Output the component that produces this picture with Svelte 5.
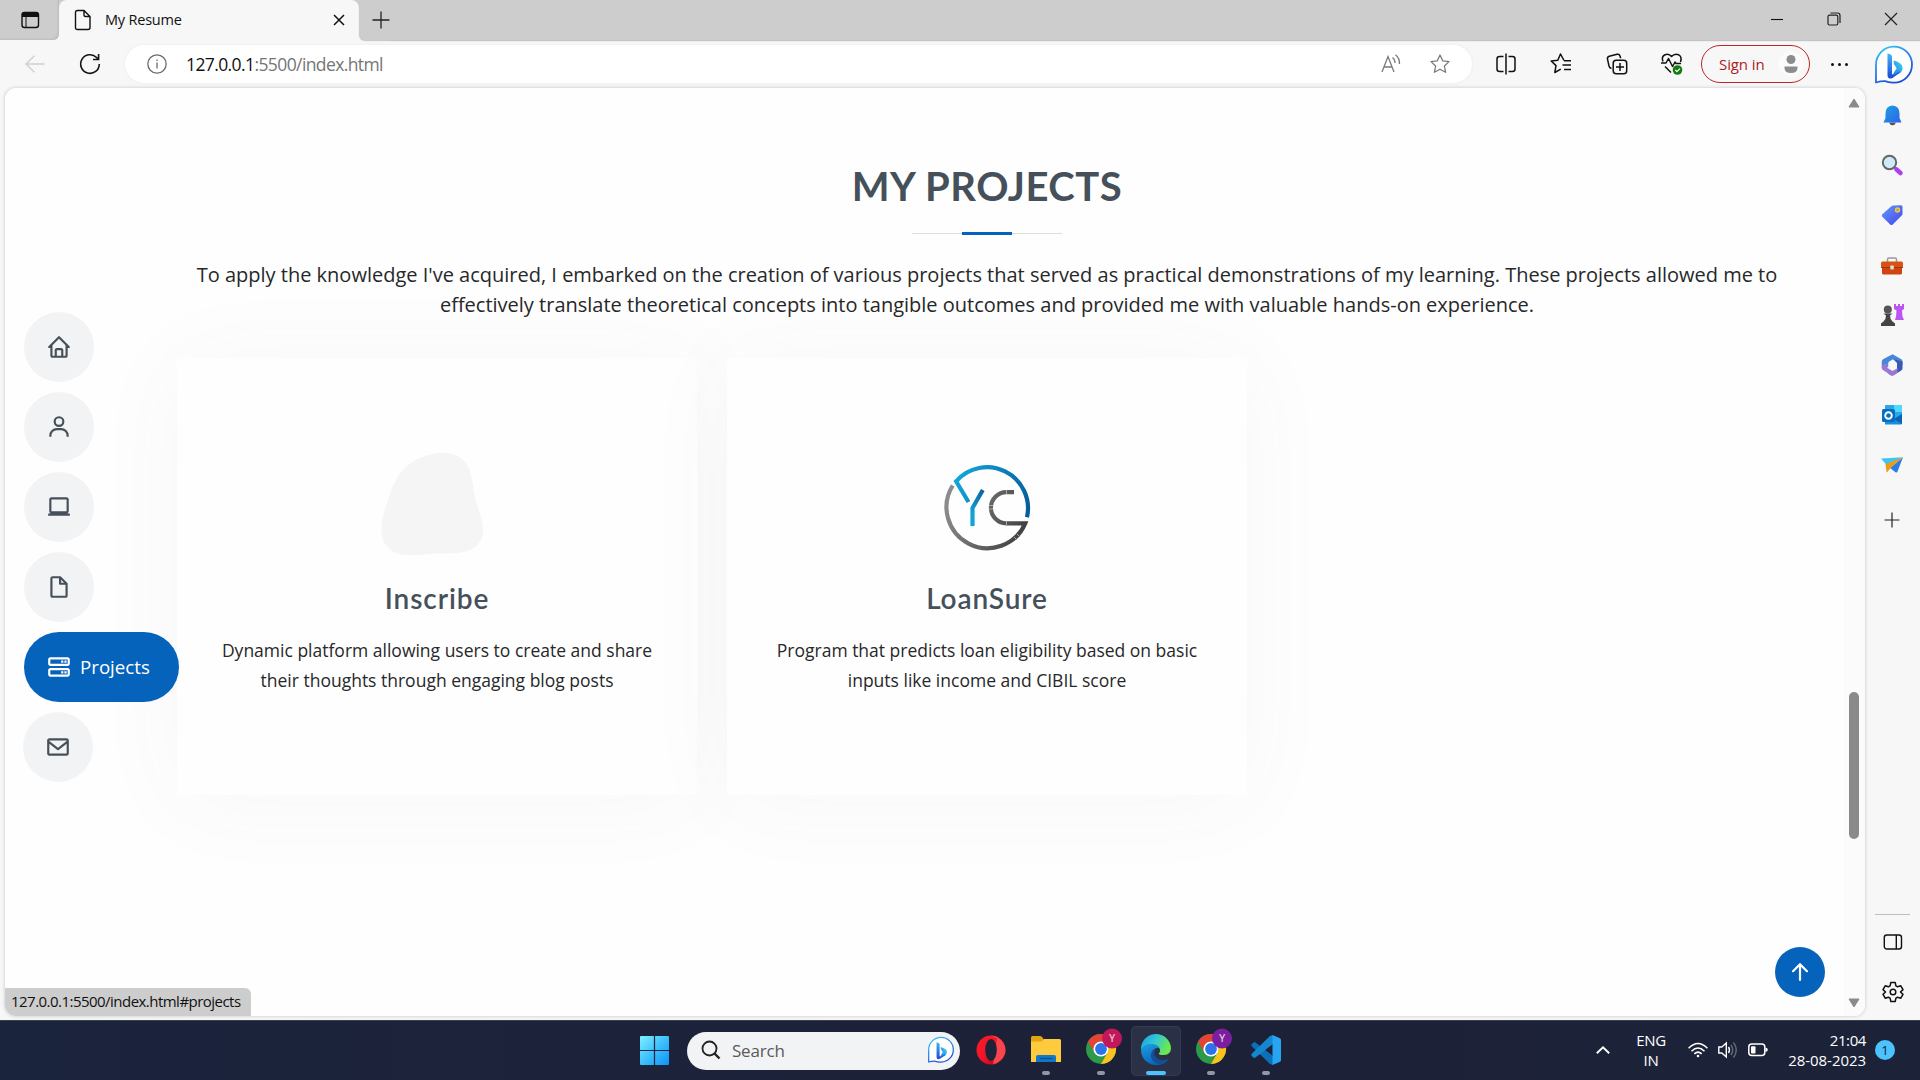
<script>
  const nav = [
    { d: 'M3 13h1v7c0 1.103.897 2 2 2h12c1.103 0 2-.897 2-2v-7h1a1 1 0 0 0 .707-1.707l-9-9a.999.999 0 0 0-1.414 0l-9 9A1 1 0 0 0 3 13zm7 7v-5h4v5h-4zm2-15.586 6 6V15l.001 5H16v-5c0-1.103-.897-2-2-2h-4c-1.103 0-2 .897-2 2v5H6v-9.586l6-6z' },
    { d: 'M12 2a5 5 0 1 0 5 5 5 5 0 0 0-5-5zm0 8a3 3 0 1 1 3-3 3 3 0 0 1-3 3zm9 11v-1a7 7 0 0 0-7-7h-4a7 7 0 0 0-7 7v1h2v-1a5 5 0 0 1 5-5h4a5 5 0 0 1 5 5v1z' },
    { d: 'M20 17.722c.595-.347 1-.985 1-1.722V5c0-1.103-.897-2-2-2H5c-1.103 0-2 .897-2 2v11c0 .736.405 1.375 1 1.722V18H2v2h20v-2h-2v-.278zM5 16V5h14l.002 11H5z' },
    { d: 'M19.937 8.68c-.011-.032-.02-.063-.033-.094a.997.997 0 0 0-.196-.293l-6-6a.997.997 0 0 0-.293-.196c-.03-.014-.062-.022-.094-.033a.991.991 0 0 0-.259-.051C13.04 2.011 13.021 2 13 2H6c-1.103 0-2 .897-2 2v16c0 1.103.897 2 2 2h12c1.103 0 2-.897 2-2V9c0-.021-.011-.04-.013-.062a.99.99 0 0 0-.05-.258zM16.586 8H14V5.414L16.586 8zM6 20V4h6v5a1 1 0 0 0 1 1h5l.002 10H6z' },
    { d: 'M20 3H4c-1.103 0-2 .897-2 2v4c0 1.103.897 2 2 2h16c1.103 0 2-.897 2-2V5c0-1.103-.897-2-2-2zM4 9V5h16v4zm16 4H4c-1.103 0-2 .897-2 2v4c0 1.103.897 2 2 2h16c1.103 0 2-.897 2-2v-4c0-1.103-.897-2-2-2zM4 19v-4h16v4z', extra: 'M17 6h2v2h-2zm-3 0h2v2h-2zm3 10h2v2h-2zm-3 0h2v2h-2z', label: 'Projects' },
    { d: 'M20 4H4c-1.103 0-2 .897-2 2v12c0 1.103.897 2 2 2h16c1.103 0 2-.897 2-2V6c0-1.103-.897-2-2-2zm0 2v.511l-8 6.223-8-6.222V6h16zM4 18V9.044l7.386 5.745a.994.994 0 0 0 1.228 0L20 9.044 20.002 18H4z' }
  ];
</script>

{#snippet bing(size)}
  <svg width={size} height={size} viewBox="0 0 38 38">
    <defs>
      <linearGradient id="bRing" x1="0" y1="0" x2="0.5" y2="1"><stop offset="0" stop-color="#2fd0ee" /><stop offset=".5" stop-color="#2f86ee" /><stop offset="1" stop-color="#1d50d8" /></linearGradient>
      <linearGradient id="bStem" x1="0" y1="0" x2="0" y2="1"><stop offset="0" stop-color="#45b4f5" /><stop offset="1" stop-color="#1b48d6" /></linearGradient>
      <linearGradient id="bBowl" x1="1" y1="0" x2="0" y2="1"><stop offset="0" stop-color="#3ae0f0" /><stop offset="1" stop-color="#2a62e4" /></linearGradient>
    </defs>
    <path d="M1 36.5V19A18 18 0 1 1 19 36.6q-5 .2-9-1.4-4-.2-9 1.300z" fill="#fff" stroke="url(#bRing)" stroke-width="1.800" stroke-linejoin="round" />
    <path d="M18.600 14.500q5.500 1.300 8 4.300 2.400 4-.8 7.800l-9.400 4.400 3.800-6.600 1.500-2-1-1.600q-2.700-3-2.100-6.300z" fill="url(#bBowl)" />
    <path d="M12.500 7.600q4.300.6 4.500 3v17.600l2 .5 6-3.800-.5 2-7 5q-5 1.900-5-2.800z" fill="url(#bStem)" />
  </svg>
{/snippet}

{#snippet chrome(fill)}
  <svg width="36" height="36" viewBox="0 0 36 36">
    <circle cx="15" cy="20" r="15" fill="#2c9a48" />
    <path d="M2 12.500A15 15 0 0 1 28 12.500H15A7.500 7.500 0 0 0 8.500 23.700z" fill="#e64334" />
    <path d="M28 12.500A15 15 0 0 1 15 35L21.500 23.700A7.500 7.500 0 0 0 15 12.500z" fill="#fcc31c" />
    <circle cx="15" cy="20" r="7.600" fill="#fff" />
    <circle cx="15" cy="20" r="5.900" fill="#2b74ea" />
    <circle cx="26" cy="9.500" r="10" {fill} />
    <text x="26" y="13.300" text-anchor="middle" font-size="10.500" font-weight="600" fill="#e6bccb">Y</text>
  </svg>
{/snippet}

<div class="screen">
  <header class="tabs">
    <div class="tab-menu">
      <svg width="20" height="20" viewBox="0 0 20 20"><rect x="2" y="2.500" width="16.500" height="15" rx="2.500" fill="none" stroke="#111" stroke-width="1.400" /><path d="M2 7V4.500Q2 2 4.500 2H16q2.500 0 2.500 2.500V7z" fill="#111" /><path d="M6 7v10" stroke="#111" stroke-width="1" /></svg>
    </div>
    <div class="tab">
      <svg width="18" height="22" viewBox="0 0 18 22" fill="none" stroke="#111" stroke-width="1.400"><path d="M3.500 1.500H10L16 7.500V18.500q0 2-2 2H3.500q-2 0-2-2V3.500q0-2 2-2zM10 1.500V6q0 1.500 1.500 1.500H16" /></svg>
      <span>My Resume</span>
      <svg class="x" width="12" height="12" viewBox="0 0 12 12" stroke="#111" stroke-width="1.500"><path d="M1 1l10 10M11 1L1 11" /></svg>
    </div>
    <svg class="plus" width="18" height="18" viewBox="0 0 18 18" stroke="#222" stroke-width="1.300"><path d="M9 .5v17M.5 9h17" /></svg>
    <div class="controls">
      <svg width="14" height="14" viewBox="0 0 14 14" stroke="#111" stroke-width="1.100"><path d="M1 7.500h12" /></svg>
      <svg width="14" height="14" viewBox="0 0 14 14" fill="none" stroke="#222" stroke-width="1.200"><rect x="1" y="3.200" width="9.800" height="9.800" rx="1.500" /><path d="M3.500 1H10.500q2.500 0 2.500 2.500V11" /></svg>
      <svg width="14" height="14" viewBox="0 0 14 14" stroke="#222" stroke-width="1.200"><path d="M1 1l12 12M13 1L1 13" /></svg>
    </div>
  </header>

  <div class="toolbar">
    <svg class="back" width="20" height="18" viewBox="0 0 20 18" fill="none" stroke="#cfcfcf" stroke-width="1.400"><path d="M19.500 9H1M9.500 .8L1 9l8.500 8.200" /></svg>
    <svg class="reload" width="22" height="22" viewBox="0 0 22 22" fill="none" stroke="#151515" stroke-width="1.600"><path d="M20.300 11A9.300 9.300 0 1 1 17.600 4.500L19.500 6.300M19.600 1v5.500H14" /></svg>
    <div class="address">
      <svg width="20" height="20" viewBox="0 0 20 20" fill="none" stroke="#6b6b6b" stroke-width="1.300"><circle cx="10" cy="10" r="9.200" /><path d="M10 8.500v6M10 5.500v1.500" /></svg>
      <span class="url"><b>127.0.0.1</b>:5500/index.html</span>
      <svg class="aloud" width="20" height="20" viewBox="0 0 20 20" fill="none" stroke="#7a7a7a" stroke-width="1.300"><path d="M1 18L7 2.500 13 18M3 13h8M11.500 3.500q2.500 1.800 2.500 5.500M14.500 .8q4.300 3.500 4 9.200" /></svg>
      <svg width="20" height="20" viewBox="0 0 20 20" fill="none" stroke="#7a7a7a" stroke-width="1.300" stroke-linejoin="round"><path d="M10 1l2.700 5.800 6.300.8-4.600 4.400 1.200 6.300L10 15.200l-5.600 3.100L5.600 12 1 7.600l6.300-.8z" /></svg>
    </div>
    <div class="tools">
      <i><svg width="22" height="22" viewBox="0 0 22 22" fill="none" stroke="#111" stroke-width="1.500"><path d="M8.500 3.500h-4Q2 3.500 2 6v10q0 2.500 2.500 2.500h4M13.500 3.500h4Q20 3.500 20 6v10q0 2.500-2.500 2.500h-4M11 .5v21" /></svg></i>
      <i><svg width="22" height="22" viewBox="0 0 22 22" fill="none" stroke="#111" stroke-width="1.500" stroke-linejoin="round"><path d="M14 7.500L10.500 1 7.800 7.200 1.200 8l4.800 4.600L4.800 19.500l6-3.400M14 7.700h7M12.500 12h8.500M14 16.500h7" /></svg></i>
      <i><svg width="22" height="22" viewBox="0 0 22 22" fill="none" stroke="#111" stroke-width="1.500"><rect x="7.200" y="7.200" width="13.500" height="13.500" rx="3" /><path d="M14 10v8M10 14h8M5.500 15.500q-2-.5-2.500-2.500L1.500 6.200Q1 4 3.300 3.300L11 1.300q2.300-.5 3 1.700l.7 2.200" /></svg></i>
      <i><svg width="24" height="24" viewBox="0 0 24 24" fill="none" stroke="#111" stroke-width="1.500" stroke-linejoin="round"><path d="M3 9.500Q1 4.500 5 2.700 9 1.200 11.500 4.500 14.500 1.200 18.500 2.700 22.300 4.800 20.500 10M1 11h5l2.500-4.500 4 8L15 10l1 1.500h5M5 14.500l6 6" /><circle cx="17.500" cy="18" r="4.800" fill="#127c10" stroke="none" /><path d="M15.300 18l1.600 1.600 3-3" stroke="#fff" stroke-width="1.200" /></svg></i>
    </div>
    <div class="signin"><span>Sign in</span>
      <svg width="26" height="26" viewBox="0 0 26 26"><circle cx="13" cy="13" r="12.500" fill="#fbfbfb" /><circle cx="13" cy="8.500" r="4.500" fill="#8c8c8c" /><path d="M6.500 15.500h13v1.500q0 5-6.500 5t-6.500-5z" fill="#8c8c8c" /></svg>
    </div>
    <div class="dots"><u></u><u></u><u></u></div>
    <div class="bing">{@render bing(38)}</div>
  </div>

  <div class="middle">
    <main>
      <section>
        <h2>MY PROJECTS</h2>
        <div class="rule"><hr /></div>
        <p class="intro">To apply the knowledge I've acquired, I embarked on the creation of various projects that served as practical demonstrations of my learning. These projects allowed me to<br />effectively translate theoretical concepts into tangible outcomes and provided me with valuable hands-on experience.</p>
        <div class="cards">
          <article>
            <div class="art blob"><svg width="125" height="125" viewBox="0 0 600 600"><path fill="#f5f5f5" d="M300,521.0016835830174C376.1290562159157,517.8887921683347,466.0731472004068,529.7835943286574,510.70327084640275,468.03025145048787C554.3714126377745,407.6079735673963,508.03601936045806,328.9844924480964,491.2728898941984,256.3432110539036C474.5976632858925,184.082847569629,479.9380746630129,96.60480741107993,416.23090153303,58.64404602377083C348.86323505073057,18.502131276798302,261.93793281208167,40.57373210992963,193.5410806939664,78.93577620505333C130.42746243093433,114.334589627462,98.30271207620316,179.96522072025542,76.75703585869454,249.04625023123273C51.97151888228291,328.5150500222984,13.704378332031375,421.85034740162234,66.52175969318436,486.19268352777647C119.04800174914682,550.1803526380478,217.28368757567262,524.383925680826,300,521.0016835830174" /></svg></div>
            <h4>Inscribe</h4>
            <p>Dynamic platform allowing users to create and share<br />their thoughts through engaging blog posts</p>
          </article>
          <article>
            <div class="art">
              <svg width="90" height="90" viewBox="0 0 90 90" fill="none" stroke-width="4.200">
                <defs>
                  <linearGradient id="yc1" x1="14" y1="20" x2="88" y2="50" gradientUnits="userSpaceOnUse"><stop offset="0" stop-color="#12a4d8" /><stop offset="1" stop-color="#075a99" /></linearGradient>
                  <linearGradient id="yc2" x1="4" y1="40" x2="80" y2="70" gradientUnits="userSpaceOnUse"><stop offset="0" stop-color="#8c8c8e" /><stop offset="1" stop-color="#424244" /></linearGradient>
                  <linearGradient id="yc3" x1="28" y1="50" x2="42" y2="27" gradientUnits="userSpaceOnUse"><stop offset="0" stop-color="#12a4d8" /><stop offset="1" stop-color="#0a62a4" /></linearGradient>
                </defs>
                <path d="M26.500 39L14.100 18.300A41 41 0 0 1 85 54.200" stroke="url(#yc1)" />
                <path d="M40.800 27L30.500 45V63" stroke="url(#yc3)" />
                <path d="M10.700 22.500A41 41 0 1 0 83.200 60.300H64.500A15.600 15.600 0 0 1 64.500 29.100H72" stroke="url(#yc2)" />
                <path d="M47 42.500h4M47 46h4M64.500 27v4M64.500 58v4M75 71l3 3M72 74l3 3" stroke="#aaa" stroke-width="1" />
              </svg>
            </div>
            <h4>LoanSure</h4>
            <p>Program that predicts loan eligibility based on basic<br />inputs like income and CIBIL score</p>
          </article>
        </div>
      </section>
      <div class="scroll">
        <svg width="12" height="10" viewBox="0 0 12 10"><path d="M6 1l5 8H1z" fill="#8b8b8b" stroke="#8b8b8b" stroke-linejoin="round" /></svg>
        <div class="thumb"></div>
        <svg width="12" height="10" viewBox="0 0 12 10"><path d="M6 9l5-8H1z" fill="#8b8b8b" stroke="#8b8b8b" stroke-linejoin="round" /></svg>
      </div>
      <nav>
        {#each nav as item, i}
          <a class:active={item.label} class:last={i === 5} href="#projects">
            <svg width="26" height="26" viewBox="0 0 24 24" fill="currentColor"><path d={item.d} />{#if item.extra}<path d={item.extra} />{/if}</svg>
            {#if item.label}<span>{item.label}</span>{/if}
          </a>
        {/each}
      </nav>
      <div class="top">
        <svg width="20" height="20" viewBox="0 0 20 20" fill="none" stroke="#fff" stroke-width="2.200" stroke-linecap="round" stroke-linejoin="round"><path d="M10 18V2.500M3 9.200l7-7 7 7" /></svg>
      </div>
      <div class="status">127.0.0.1:5500/index.html#projects</div>
    </main>

    <aside>
      <i><svg width="22" height="22" viewBox="0 0 22 22"><defs><linearGradient id="bell" x1="0" y1="0" x2="1" y2="1"><stop offset="0" stop-color="#1ea1dc" /><stop offset="1" stop-color="#2c62f0" /></linearGradient></defs><path d="M8 18.500h7q-1 2.700-3.500 2.700T8 18.500z" fill="#555" /><path d="M11.500 1.500q7 .5 7 8v4.500l2 4.500H2.500l2-4.500V9.500q0-7.500 7-8z" fill="url(#bell)" /></svg></i>
      <i><svg width="22" height="22" viewBox="0 0 22 22"><path d="M13 13l3 3" stroke="#666" stroke-width="2" /><path d="M15.500 15.500l4 3.500" stroke="#b23df0" stroke-width="4.500" stroke-linecap="round" /><circle cx="8.500" cy="8.500" r="6.700" fill="#cfeafa" stroke="#666" stroke-width="2" /></svg></i>
      <i><svg width="22" height="22" viewBox="0 0 22 22"><defs><linearGradient id="tag" x1="0" y1="0" x2="1" y2="1"><stop offset="0" stop-color="#669cf8" /><stop offset="1" stop-color="#4242ee" /></linearGradient></defs><path d="M12.500 1.500l7.500-.3q1.500 0 1.500 1.500v7q0 1-.8 1.800l-9 9q-1.200 1.200-2.500 0L1.300 12.700q-1-1.200 0-2.400l9-8q1-.8 2.200-.8z" fill="url(#tag)" /><circle cx="16.500" cy="6" r="2" fill="#99c" stroke="#f5cb27" stroke-width="1.400" /></svg></i>
      <i class="low"><svg width="24" height="20" viewBox="0 0 24 20"><path d="M7.500 7V3.500Q7.500 2 9 2h6q1.500 0 1.500 1.500V7" fill="none" stroke="#999" stroke-width="1.500" /><rect x="2" y="10" width="20" height="8.500" rx="1.500" fill="#cf4410" /><rect x="1" y="5.500" width="22" height="6" rx="1.500" fill="#d85414" /><path d="M1 11.500h22" stroke="#a8340c" /><rect x="10.300" y="9.500" width="3.500" height="4" rx=".8" fill="#ddd" /></svg></i>
      <i><svg width="24" height="24" viewBox="0 0 24 24"><path d="M14 1h2v2h2V1h2v2h2V1h2v5l-2 1.500.5 6 1.500 3.500h-9l1-3.500.5-6L14 6z" fill="#bd55f5" /><circle cx="7.800" cy="6.500" r="4" fill="#555" /><path d="M3.500 10.500h9l-2.500 2q0 4 2.500 6l2.500 2v2.500H1v-2.500l2.500-2q2.500-2 2.500-6z" fill="#444" /></svg></i>
      <i><svg width="22" height="22" viewBox="0 0 22 22"><path d="M11.500.3L20 5q1.500.9 1.500 2.500v4l-5-4-4.500-2.300-4.500 2.800v4.500L1.500 15Q.8 14.300.8 13V7.500Q.8 6 2 5.200z" fill="#4488da" /><path d="M21.500 7.500v6.700q0 1.500-1.200 2.200l-7.800 4.800q-1.300.8-2.700 0l-2.800-1.700 9-4.500V9l-4-4z" fill="#3b59b4" /><path d="M.8 11.500v2.500q0 1.300 1.200 2.100l7.500 4.900q1.700 1 3.200 0l3.800-2.400V14.300l-5 2.700-5-3V9z" fill="#9c78d2" /><circle cx="11.200" cy="11" r="3.900" fill="#f7f7f7" /></svg></i>
      <i><svg width="22" height="22" viewBox="0 0 22 22"><rect x="4" y="1" width="17" height="13" rx="1" fill="#28a8ea" /><path d="M13 1h8v7h-8z" fill="#50d9ff" /><path d="M4 20.500h16q1 0 1-1V10l-8 5-9 2z" fill="#1490df" /><path d="M21 10v10l-8-5z" fill="#0a62b5" /><rect x="1" y="5" width="13" height="13" rx="1.500" fill="#0a6cbe" /><circle cx="7.500" cy="11.500" r="3.300" fill="none" stroke="#fff" stroke-width="1.900" /></svg></i>
      <i><svg width="24" height="18" viewBox="0 0 24 18"><path d="M1 2.500L23 1.300 7 9.500z" fill="#3fc4f4" /><path d="M23 1.300L17.500 15.500q-.5 1.500-2 .8L10 12z" fill="#2a7cec" /><path d="M5.500 8.200L23 1.300 11 11.500l-4 5q-.8-1-.8-3z" fill="#ee9c16" /></svg></i>
      <i class="add"><svg width="16" height="16" viewBox="0 0 16 16" stroke="#222" stroke-width="1.200"><path d="M8 .5v15M.5 8h15" /></svg></i>
      <div class="bottom">
        <i><svg width="20" height="18" viewBox="0 0 20 18" fill="none" stroke="#111" stroke-width="1.400"><rect x="1.300" y="2" width="17.200" height="14" rx="2.500" /><path d="M13.300 2v14" /></svg></i>
        <i><svg width="22" height="22" viewBox="0 0 22 22" fill="none" stroke="#111" stroke-width="1.500" stroke-linejoin="round"><path d="M8.800 1.500h4.400l.7 3.300 1.700 1 3.200-1 2.200 3.800-2.500 2.400 2.500 2.400-2.200 3.800-3.200-1-1.700 1-.7 3.300H8.800l-.7-3.300-1.700-1-3.200 1L1 13.400 3.500 11 1 8.600l2.200-3.800 3.200 1 1.700-1z" /><circle cx="11" cy="11" r="2.800" /></svg></i>
      </div>
    </aside>
  </div>

  <footer>
    <svg class="start" width="29" height="29" viewBox="0 0 29 29"><defs><linearGradient id="win" x1="0" y1="0" x2="1" y2="1" ><stop offset="0" stop-color="#7df2ff" /><stop offset=".5" stop-color="#3fc0fc" /><stop offset="1" stop-color="#0d92f8" /></linearGradient></defs><rect width="29" height="29" rx="1" fill="url(#win)" /><path d="M14.500 0v29M0 14.500h29" stroke="#1c2440" stroke-width="1.200" /></svg>
    <div class="search">
      <svg width="20" height="20" viewBox="0 0 20 20" fill="none" stroke="#222"><circle cx="8.500" cy="8.500" r="7" stroke-width="1.800" /><path d="M13.500 13.500l5 5" stroke-width="2.400" /></svg>
      <span>Search</span>
      {@render bing(26)}
    </div>
    <div class="apps">
      <div class="app"><svg width="30" height="30" viewBox="0 0 30 30"><defs><linearGradient id="op" x1="0" y1="0" x2="1" y2="1"><stop offset="0" stop-color="#ff1b2d" /><stop offset=".5" stop-color="#f01426" /><stop offset="1" stop-color="#a70014" /></linearGradient></defs><ellipse cx="15" cy="15" rx="14.500" ry="14.500" fill="url(#op)" /><path d="M15 .5q6 .3 10 4.500 4.500 4.500 4.500 10t-4.500 10q-4 4-8 4.500l4-26z" fill="#f8464c" /><ellipse cx="15" cy="15" rx="5.800" ry="11" fill="#1d2339" /></svg></div>
      <div class="app run"><svg width="30" height="28" viewBox="0 0 30 28"><path d="M0 2.500Q0 1 1.500 1H9q1.500 0 2.500 1.500L13 5v3H0z" fill="#e2a414" /><path d="M0 6.500h10.500L13 4h15.500Q30 4 30 5.500V27H0z" fill="#fecb3e" /><path d="M5 27v-5q0-2 2-2h16q2 0 2 2v5z" fill="#1277c8" /><path d="M8.500 23.500h13" stroke="#0b4d8e" stroke-width="1.200" /></svg></div>
      <div class="app run badge">{@render chrome('#c2185b')}</div>
      <div class="app run current"><svg width="30" height="30" viewBox="0 0 30 30"><defs><linearGradient id="e1" x1="0" y1="0" x2="1" y2=".4"><stop offset="0" stop-color="#1a9de0" /><stop offset=".5" stop-color="#32c6d8" /><stop offset="1" stop-color="#6be94e" /></linearGradient><linearGradient id="e2" x1="0" y1="0" x2=".5" y2="1"><stop offset="0" stop-color="#1aa0e2" /><stop offset="1" stop-color="#0c62b8" /></linearGradient></defs><path d="M0 15A15 15 0 0 1 30 13q0 6.500-7 7-5 .2-5.300-1.500 1.800-2 1.300-4-1.500-4.500-8-5Q4 9 0 15z" fill="url(#e1)" /><path d="M0 15.500Q3.500 8.500 11 9q6 .5 7.500 4-4-1-6.500 2.500Q9.500 21 14 25.500t13.500-1Q23 30 15 30A15 15 0 0 1 0 15.500z" fill="url(#e2)" /><path d="M11.500 15.500q-3.500 5 .5 10.500 4 4.500 9 2.700 4.500-1.700 6.500-5-7 3-11.500-.5-4.500-4-1.500-9-1.700 0-3 1.300z" fill="#124f98" /></svg></div>
      <div class="app run badge">{@render chrome('#7b1fa2')}</div>
      <div class="app run"><svg width="30" height="30" viewBox="0 0 30 30"><path d="M22 0v30l-3-1L1 11.500q-1.300-1.300 0-2.700l1.500-1.300q1-.8 2 0L22 21z" fill="#0b70b8" /><path d="M22 9L4.500 22.500q-1 .8-2 0L1 21.200q-1.300-1.400 0-2.700L19 1l3-1z" fill="#1487d0" /><path d="M21.500 0L29 3.200q1 .5 1 1.800v20q0 1.300-1 1.800L21.500 30z" fill="#27a5f2" /></svg></div>
    </div>
    <div class="tray">
      <svg class="caret" width="14" height="8" viewBox="0 0 14 8" fill="none" stroke="#fff" stroke-width="1.900"><path d="M.8 7.200L7 1.300l6.200 5.900" /></svg>
      <div class="lang">ENG<br />IN</div>
      <svg class="wifi" width="20" height="16" viewBox="0 0 20 16" fill="none" stroke="#fff" stroke-width="1.500"><path d="M.6 6.200q9.400-9.600 18.800 0M3.500 9.200q6.500-6.500 13 0M6.300 11.900q3.700-3.500 7.400 0" /><circle cx="10" cy="14" r="1.300" fill="#fff" stroke="none" /></svg>
      <svg class="vol" width="20" height="18" viewBox="0 0 20 18" fill="none" stroke="#fff" stroke-width="1.400"><path d="M.8 6h3l4.500-4v14l-4.500-4h-3zM10.500 6q2 3 0 6" /><path d="M13 4q3.500 5 0 10M15.500 1.500q5.500 7.500 0 15" stroke="#666b7c" /></svg>
      <svg class="bat" width="20" height="14" viewBox="0 0 20 14"><rect x=".8" y="1" width="16" height="11.500" rx="3" fill="none" stroke="#fff" stroke-width="1.500" /><rect x="3" y="3.200" width="4.500" height="7.200" rx="1" fill="#fff" /><path d="M17.500 4.500q2.300.5 2.300 2.300t-2.300 2.300z" fill="#fff" /></svg>
      <div class="clock"><span>21:04</span><br />28-08-2023</div>
      <div class="count">1</div>
    </div>
  </footer>
</div>

<style>
  :global(body) { margin: 0; overflow: hidden; }
  .screen { width: 1920px; height: 1080px; display: flex; flex-direction: column; background: #f7f7f7; font-family: "Open Sans", "Noto Sans", sans-serif; color: #111; overflow: hidden; }
  svg { display: block; flex: none; overflow: visible; }
  i { display: flex; align-items: center; justify-content: center; }

  .tabs { height: 40px; display: flex; background: #f7f7f7; }
  .tab-menu { width: 59px; box-sizing: border-box; background: #cdcdcd; border-radius: 0 0 6px 0; padding: 10px 0 0 20px; box-shadow: inset -2px -2px 2px -1px #bbb; }
  .tab { width: 300px; box-sizing: border-box; display: flex; align-items: center; padding: 0 14px 0 15px; background: #f7f7f7; border-radius: 8px 8px 0 0; box-shadow: 0 -8px 0 #cdcdcd; }
  .tab span { margin-left: 13px; padding-bottom: 2px; font-size: 14.500px; letter-spacing: -0.2px; }
  .tab .x { margin-left: auto; }
  .plus { box-sizing: content-box; padding: 11px 0 11px 13px; background: #cdcdcd; border-radius: 0 0 0 6px; box-shadow: 0 1px 1px #c4c4c4; }
  .controls { flex: 1; background: #cdcdcd; display: flex; justify-content: flex-end; align-items: center; gap: 43px; padding: 0 22px 2px 0; height: 38px; box-shadow: 0 1px 1px #c4c4c4; }

  .toolbar { height: 48px; display: flex; align-items: center; }
  .back { margin-left: 25px; }
  .reload { margin-left: 34px; }
  .address { margin-left: 24px; width: 1347px; height: 38px; box-sizing: border-box; border-radius: 19px; background: #fff; display: flex; align-items: center; padding: 0 22px; box-shadow: 0 0 3px #e8e8e8; }
  .url { margin-left: 19px; padding-bottom: 1px; font-size: 17.500px; color: #757575; letter-spacing: -0.6px; }
  .url b { font-weight: 400; color: #111; }
  .aloud { margin-left: auto; margin-right: 29px; }
  .tools { margin-left: 6px; display: flex; }
  .tools i { width: 55.500px; }
  .signin { margin-left: 1px; width: 109px; height: 38px; box-sizing: border-box; border: 1.500px solid #b8252c; border-radius: 19px; display: flex; align-items: center; justify-content: space-between; padding: 0 5px 0 17px; color: #b0191f; font-size: 15px; letter-spacing: -0.1px; }
  .signin span { padding-bottom: 1px; }
  .dots { width: 59px; display: flex; gap: 4px; justify-content: center; }
  .dots u { width: 3px; height: 3px; border-radius: 2px; background: #111; }
  .bing { width: 50px; padding-top: 1px; display: flex; justify-content: center; }

  .middle { display: flex; height: 932px; }
  main { position: relative; margin-left: 5px; width: 1860px; height: 928px; background: #fefefe; border-radius: 11px; box-shadow: 0 0 3px 1px #d8d8d8; display: flex; overflow: hidden; }
  section { width: 1839px; padding: 74px 32px 0 157px; box-sizing: border-box; }
  h2 { margin: 0; font: 700 40px/48px Lato, sans-serif; color: #45505b; text-align: center; letter-spacing: 0.5px; }
  .rule { width: 150px; margin: 22px auto 0; height: 3px; display: flex; justify-content: center; background: linear-gradient(#ddd, #ddd) 0 1px / 100% 1px no-repeat; }
  hr { margin: 0; border: 0; width: 50px; height: 3px; background: #0563bb; }
  .intro { margin: 25px 0 0; font-size: 20px; line-height: 30px; text-align: center; white-space: nowrap; color: #272829; }
  .cards { display: flex; gap: 30px; margin: 38px 0 0 15px; }
  article { width: 520px; height: 437px; box-sizing: border-box; padding-top: 87px; background: #fefefe; text-align: center; box-shadow: 0 5px 90px rgba(100, 100, 108, 0.045); }
  .art { height: 125px; display: flex; justify-content: center; align-items: center; }
  .blob { margin-right: 3px; }
  h4 { margin: 11px 0 0; font: 600 28px/34px Lato, sans-serif; color: #45505b; letter-spacing: 0.9px; }
  article p { margin: 20px 0 0; font-size: 17.500px; line-height: 30px; color: #272829; white-space: nowrap; }

  .scroll { flex: 1; background: #fbfbfb; display: flex; flex-direction: column; align-items: center; padding: 10px 1px 8px 0; }
  .thumb { width: 10px; height: 147px; border-radius: 5px; background: #8a8a8a; margin: 584px 0 auto; }
  nav { position: absolute; left: 19px; top: 224px; display: flex; flex-direction: column; gap: 10px; align-items: flex-start; }
  a { width: 70px; height: 70px; box-sizing: border-box; border-radius: 35px; background: #f2f3f5; color: #45505b; display: flex; align-items: center; padding-left: 22px; text-decoration: none; }
  a.active { width: 155px; background: #0563bb; color: #fff; }
  a.last { margin-left: -1px; }
  a span { margin-left: 8px; padding-bottom: 2px; font-size: 18.700px; }
  .top { position: absolute; left: 1770px; top: 859px; width: 50px; height: 50px; border-radius: 50%; background: #0563bb; display: flex; align-items: center; justify-content: center; }
  .status { position: absolute; left: 0; bottom: 0; width: 246px; height: 28px; box-sizing: border-box; padding-left: 6px; background: #cdcdcd; border-radius: 0 6px 0 0; font-size: 15px; line-height: 26px; letter-spacing: -0.53px; white-space: nowrap; }

  aside { width: 55px; padding: 2px 1px 0 0; box-sizing: border-box; display: flex; flex-direction: column; }
  aside i { height: 50px; flex: none; }
  aside .low { padding-top: 2px; height: 48px; }
  aside .add { height: 59px; }
  .bottom { margin: auto 9px 3px 10px; border-top: 1px solid #bdbdbd; padding-top: 2px; }

  footer { height: 60px; box-sizing: border-box; display: flex; align-items: center; padding-left: 640px; border-top: 1px solid #39404e; background: linear-gradient(90deg, #1b243d, #1d2137 60%, #1c2339); color: #fff; }
  .search { margin-left: 18px; width: 273px; height: 38px; box-sizing: border-box; border-radius: 19px; background: #f2f3f5; display: flex; align-items: center; padding: 0 6px 1px 14px; color: #5a5a5a; font-size: 17px; }
  .search span { margin: 0 auto 0 11px; letter-spacing: -0.2px; }
  .apps { display: flex; gap: 5px; margin-left: 6px; }
  .app { width: 50px; height: 50px; box-sizing: border-box; padding-top: 9px; display: flex; flex-direction: column; align-items: center; justify-content: space-between; }
  .app:first-child { justify-content: flex-start; }
  .badge { padding-top: 3px; }
  .badge svg { margin-left: 6px; }
  .run::after { content: ""; width: 8px; height: 4px; border-radius: 2px; background: #9296a2; margin-bottom: 1px; }
  .current { background: #2a3046; border-radius: 5px; box-shadow: inset 0 0 0 1px #343a4f; }
  .current::after { width: 20px; background: #4cc2ff; }
  .tray { margin-left: auto; display: flex; align-items: center; padding: 0 25px 2px 0; font-size: 15px; line-height: 20px; }
  .lang { width: 44px; margin-left: 19px; text-align: center; letter-spacing: -0.3px; }
  .wifi { margin-left: 15px; }
  .vol { margin-left: 10px; }
  .bat { margin-left: 10px; }
  .clock { width: 88px; margin-left: 10px; text-align: right; letter-spacing: -0.05px; white-space: nowrap; }
  .clock span { letter-spacing: -0.4px; }
  .count { width: 20px; height: 20px; margin-left: 9px; border-radius: 50%; background: #4cc2ff; color: #10243a; font-size: 13px; text-align: center; }
</style>
